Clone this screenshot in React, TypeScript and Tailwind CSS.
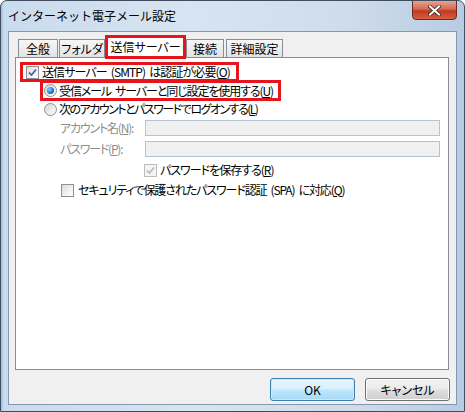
import React from "react";

const font = {
  fontFamily: '"Noto Sans CJK JP", "Liberation Sans", sans-serif',
};

const Check = ({ checked, disabled }: { checked?: boolean; disabled?: boolean }) => (
  <span
    className={`flex h-[13px] w-[13px] shrink-0 items-center justify-center border ${
      disabled ? "border-[#bcbcbc] bg-[#f4f4f4]" : "border-[#8f8f8f] bg-[linear-gradient(135deg,#dcdcdc,#ffffff)]"
    }`}
  >
    {checked && (
      <svg width="9" height="9" viewBox="0 0 9 9">
        <path
          d="M1 4.5 L3.5 7 L8 1.5"
          fill="none"
          stroke={disabled ? "#b8b8b8" : "#3d5aa8"}
          strokeWidth="1.6"
        />
      </svg>
    )}
  </span>
);

const Radio = ({ checked }: { checked?: boolean }) => (
  <span className="flex h-[13px] w-[13px] shrink-0 items-center justify-center rounded-full border border-[#8f8f8f] bg-[linear-gradient(135deg,#d6d6d6,#ffffff)]">
    {checked && (
      <span className="h-[7px] w-[7px] rounded-full bg-[radial-gradient(circle_at_35%_35%,#8fd1ff,#1a6fc9_60%,#0b3f8a)]" />
    )}
  </span>
);

const Tab = ({ label, w }: { label: string; w: string }) => (
  <div
    className={`flex h-[18px] ${w} items-center justify-center border border-b-0 border-[#898c95] bg-[linear-gradient(#f7f7f7,#e3e3e3)] text-[12px] text-black`}
  >
    {label}
  </div>
);

const Sp = () => <span className="inline-block w-[4px]" />;

export default function App() {
  return (
    <div
      className="relative h-[412px] w-[465px] overflow-hidden rounded-t-[7px] border border-[#3f4d5e] bg-[linear-gradient(90deg,#9fbddd_0px,#c9dbee_3px,#d7e4f1_40%,#cfdcea_75%,#b7cce3_100%)] [font-feature-settings:'palt']"
      style={font}
    >
      {/* title bar */}
      <div className="flex h-[30px] items-center pl-[7px]">
        <span className="text-[12px] text-black [font-feature-settings:normal]">インターネット電子メール設定</span>
      </div>
      <div className="absolute right-[7px] top-[-1px] flex h-[20px] w-[45px] items-center justify-center rounded-b-[4px] border border-[#6e2a20] bg-[linear-gradient(#e7a291,#d36a53_45%,#c2391f_55%,#d4603f)]">
        <svg width="13" height="11" viewBox="0 0 13 11">
          <path d="M2 1.5 L11 9.5 M11 1.5 L2 9.5" stroke="#3a2420" strokeWidth="3.6" strokeLinecap="square" />
          <path d="M2 1.5 L11 9.5 M11 1.5 L2 9.5" stroke="#ffffff" strokeWidth="2" strokeLinecap="square" />
        </svg>
      </div>

      {/* client area */}
      <div className="ml-[7px] h-[374px] w-[449px] border border-[#8597ad] bg-[#f0f0f0] px-[6px] pt-[6px]">
        {/* tabs */}
        <div className="flex h-[19px] items-end pl-[3px]">
          <Tab label="全般" w="w-[40px]" />
          <div className="ml-[1px]">
            <Tab label="フォルダ" w="w-[46px]" />
          </div>
          <div className="relative z-10 -mb-[2px] flex h-[24px] w-[81px] items-center justify-center border-[3px] border-[#e8141c] bg-white text-[12px] text-black">
            送信サーバー
          </div>
          <Tab label="接続" w="w-[38px]" />
          <div className="ml-[2px]">
            <Tab label="詳細設定" w="w-[57px]" />
          </div>
        </div>

        {/* pane */}
        <div className="relative h-[313px] w-[434px] border border-[#898c95] bg-white pt-[5px] text-[12px] text-black">
          <div className="pointer-events-none absolute left-[4px] top-[4px] h-[20px] w-[219px] border-[3px] border-[#e8141c]" />
          <div className="pointer-events-none absolute left-[24px] top-[22px] h-[21px] w-[241px] border-[3px] border-[#e8141c]" />

          <div className="flex h-[18px] items-center gap-[3px] whitespace-nowrap pl-[10px] tracking-[-0.9px]">
            <Check checked />
            <span>送信サーバー<Sp />(SMTP)<Sp />は認証が必要(<u>O</u>)</span>
          </div>
          <div className="flex h-[19px] items-center gap-[2px] whitespace-nowrap pl-[28px] tracking-[-1.1px]">
            <Radio checked />
            <span>受信メール<Sp />サーバーと同じ設定を使用する(<u>U</u>)</span>
          </div>
          <div className="flex h-[18px] items-center gap-[2px] whitespace-nowrap pl-[28px] tracking-[-1.5px]">
            <Radio />
            <span>次のアカウントとパスワードでログオンする(<u>L</u>)</span>
          </div>
          <div className="mt-[1px] flex h-[18px] items-center whitespace-nowrap pl-[44px] text-[#8d8d8d]">
            <span className="w-[85px] tracking-[-1.2px]">アカウント名(<u>N</u>):</span>
            <div className="h-[16px] w-[295px] border border-[#b3c3d3] bg-[#f0f0f0]" />
          </div>
          <div className="mt-[3px] flex h-[18px] items-center whitespace-nowrap pl-[44px] text-[#8d8d8d]">
            <span className="w-[85px] tracking-[-1.2px]">パスワード(<u>P</u>):</span>
            <div className="h-[16px] w-[295px] border border-[#b3c3d3] bg-[#f0f0f0]" />
          </div>
          <div className="mt-[3px] flex h-[18px] items-center gap-[3px] whitespace-nowrap pl-[128px] tracking-[-1px]">
            <Check checked disabled />
            <span>パスワードを保存する(<u>R</u>)</span>
          </div>
          <div className="mt-[2px] flex h-[18px] items-center gap-[4px] whitespace-nowrap pl-[45px] tracking-[-1.1px]">
            <Check />
            <span>セキュリティで保護されたパスワード認証<Sp />(SPA)<Sp />に対応(<u>Q</u>)</span>
          </div>
        </div>

        {/* buttons */}
        <div className="mt-[8px] flex justify-end gap-[10px] text-[12px] font-normal text-black">
          <button className="h-[23px] w-[85px] rounded-[3px] border border-[#3c7fb1] bg-[linear-gradient(#eaf6fd,#d9f0fc_45%,#bee6fd_55%,#a7d9f5)] shadow-[inset_0_0_0_1px_#cbe9f9]">
            OK
          </button>
          <button className="h-[23px] w-[85px] rounded-[3px] border border-[#707070] bg-[linear-gradient(#f2f2f2,#ebebeb_45%,#dddddd_55%,#cfcfcf)] shadow-[inset_0_0_0_1px_#fcfcfc]">
            キャンセル
          </button>
        </div>
      </div>
    </div>
  );
}
